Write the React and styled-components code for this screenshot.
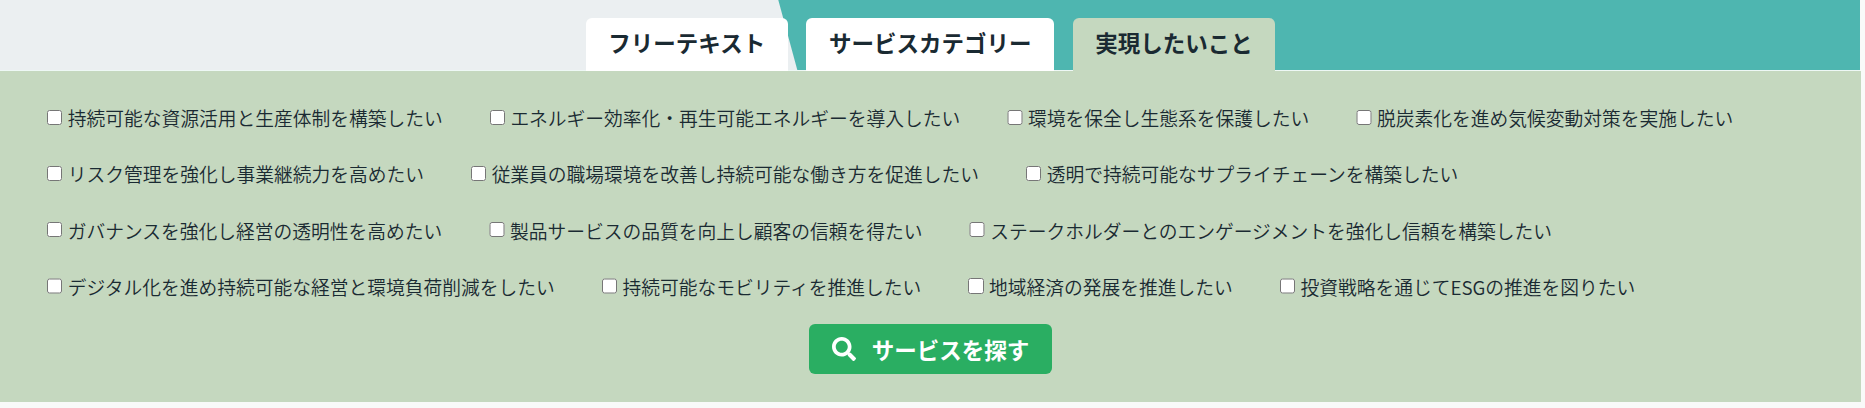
// src/App.jsx

import { useState } from 'react';
import styled, { createGlobalStyle } from 'styled-components';
import { FaSearch } from 'react-icons/fa';

const TABS = ['フリーテキスト', 'サービスカテゴリー', '実現したいこと'];

const GOALS = [
  '持続可能な資源活用と生産体制を構築したい',
  'エネルギー効率化・再生可能エネルギーを導入したい',
  '環境を保全し生態系を保護したい',
  '脱炭素化を進め気候変動対策を実施したい',
  'リスク管理を強化し事業継続力を高めたい',
  '従業員の職場環境を改善し持続可能な働き方を促進したい',
  '透明で持続可能なサプライチェーンを構築したい',
  'ガバナンスを強化し経営の透明性を高めたい',
  '製品サービスの品質を向上し顧客の信頼を得たい',
  'ステークホルダーとのエンゲージメントを強化し信頼を構築したい',
  'デジタル化を進め持続可能な経営と環境負荷削減をしたい',
  '持続可能なモビリティを推進したい',
  '地域経済の発展を推進したい',
  '投資戦略を通じてESGの推進を図りたい',
];

function App() {
  const [activeTab, setActiveTab] = useState(2);

  return (
    <>
      <GlobalStyle />
      <SearchSection>
        <TabBar>
          {TABS.map((tab, i) => (
            <Tab key={tab} $active={i === activeTab} onClick={() => setActiveTab(i)}>
              {tab}
            </Tab>
          ))}
        </TabBar>
        <Panel>
          <GoalList>
            {GOALS.map((goal) => (
              <GoalLabel key={goal}>
                <Checkbox type="checkbox" />
                {goal}
              </GoalLabel>
            ))}
          </GoalList>
          <SearchButton type="button">
            <FaSearch size={24} />
            サービスを探す
          </SearchButton>
        </Panel>
      </SearchSection>
    </>
  );
}

// --- styled-components ---

const GlobalStyle = createGlobalStyle`
  * { box-sizing: border-box; }
  body {
    margin: 0;
    background: #f9faf9;
    color: #1a2a32;
    font-family: 'Noto Sans CJK JP', sans-serif;
  }
`;

const SearchSection = styled.section`
  width: 1861px;
`;

const TabBar = styled.div`
  display: flex; justify-content: center; align-items: flex-end;
  gap: 18.75px;
  width: 1860px; height: 71px;
  padding-left: 1px;
  /* 斜めに切り替わる背景 + 下端の細い線 */
  background:
    linear-gradient(#eef8f5, #eef8f5) bottom / 100% 1px no-repeat,
    linear-gradient(74.8deg, #ebeff1 calc(50% - 137.6px), #4eb6b0 calc(50% - 136.6px));
`;

const Tab = styled.button`
  height: 53px;
  padding: 0 22.5px 4px;
  border: none; border-radius: 6px 6px 0 0;
  background: ${(props) => (props.$active ? '#c5d8bf' : '#fff')};
  color: inherit; font-family: inherit;
  font-size: 22.5px; font-weight: 700; line-height: 1;
  cursor: pointer;
`;

const Panel = styled.div`
  display: flex; flex-direction: column; align-items: center;
  height: 331px;
  padding: 28px 46.9px 0;
  background: #c5d8bf;
`;

const GoalList = styled.div`
  display: flex; flex-wrap: wrap;
  column-gap: 46.9px; row-gap: 18.25px;
  width: 100%;
`;

const GoalLabel = styled.label`
  display: flex; align-items: center;
  height: 38px;
  font-size: 18.75px; line-height: 38px; font-weight: 350;
  white-space: nowrap;
  cursor: pointer;
`;

const Checkbox = styled.input`
  width: 15.3px; height: 15.3px;
  margin: 0 5.5px 1.6px 0;
`;

const SearchButton = styled.button`
  display: flex; align-items: center; justify-content: center;
  gap: 16px;
  width: 243px; height: 50px;
  margin-top: 18.25px;
  border: none; border-radius: 6px;
  background: #2aae62;
  color: #fff; font-family: inherit;
  font-size: 22.5px; font-weight: 700; line-height: 1;
  cursor: pointer;
`;

export default App;
